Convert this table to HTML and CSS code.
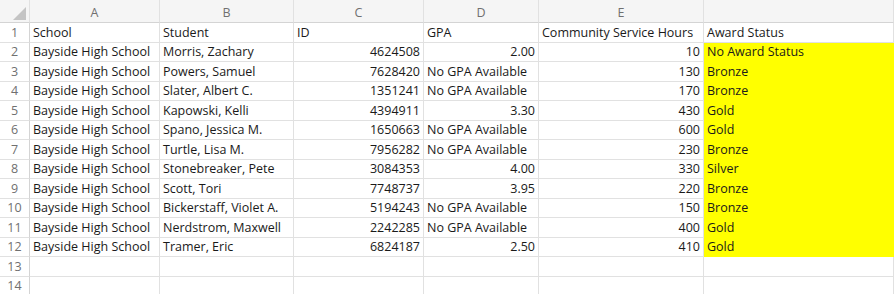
FILE: index.html
```html
<!DOCTYPE html>
<html>
<head>
<meta charset="utf-8">
<link rel="stylesheet" href="styles.css">
</head>
<body>
<div class="sheet">
  <div class="hd corner"><span class="tri"></span></div>
  <div class="hd">A</div><div class="hd">B</div><div class="hd">C</div><div class="hd">D</div><div class="hd">E</div><div class="hd"></div>

  <div class="rn">1</div><div class="c">School</div><div class="c">Student</div><div class="c">ID</div><div class="c">GPA</div><div class="c">Community Service Hours</div><div class="c">Award Status</div>
  <div class="rn">2</div><div class="c">Bayside High School</div><div class="c">Morris, Zachary</div><div class="c r">4624508</div><div class="c r">2.00</div><div class="c r">10</div><div class="c y">No Award Status</div>
  <div class="rn">3</div><div class="c">Bayside High School</div><div class="c">Powers, Samuel</div><div class="c r">7628420</div><div class="c">No GPA Available</div><div class="c r">130</div><div class="c y">Bronze</div>
  <div class="rn">4</div><div class="c">Bayside High School</div><div class="c">Slater, Albert C.</div><div class="c r">1351241</div><div class="c">No GPA Available</div><div class="c r">170</div><div class="c y">Bronze</div>
  <div class="rn">5</div><div class="c">Bayside High School</div><div class="c">Kapowski, Kelli</div><div class="c r">4394911</div><div class="c r">3.30</div><div class="c r">430</div><div class="c y">Gold</div>
  <div class="rn">6</div><div class="c">Bayside High School</div><div class="c">Spano, Jessica M.</div><div class="c r">1650663</div><div class="c">No GPA Available</div><div class="c r">600</div><div class="c y">Gold</div>
  <div class="rn">7</div><div class="c">Bayside High School</div><div class="c">Turtle, Lisa M.</div><div class="c r">7956282</div><div class="c">No GPA Available</div><div class="c r">230</div><div class="c y">Bronze</div>
  <div class="rn">8</div><div class="c">Bayside High School</div><div class="c">Stonebreaker, Pete</div><div class="c r">3084353</div><div class="c r">4.00</div><div class="c r">330</div><div class="c y">Silver</div>
  <div class="rn">9</div><div class="c">Bayside High School</div><div class="c">Scott, Tori</div><div class="c r">7748737</div><div class="c r">3.95</div><div class="c r">220</div><div class="c y">Bronze</div>
  <div class="rn">10</div><div class="c">Bayside High School</div><div class="c">Bickerstaff, Violet A.</div><div class="c r">5194243</div><div class="c">No GPA Available</div><div class="c r">150</div><div class="c y">Bronze</div>
  <div class="rn">11</div><div class="c">Bayside High School</div><div class="c">Nerdstrom, Maxwell</div><div class="c r">2242285</div><div class="c">No GPA Available</div><div class="c r">400</div><div class="c y">Gold</div>
  <div class="rn">12</div><div class="c">Bayside High School</div><div class="c">Tramer, Eric</div><div class="c r">6824187</div><div class="c r">2.50</div><div class="c r">410</div><div class="c y">Gold</div>
  <div class="rn">13</div><div class="c"></div><div class="c"></div><div class="c"></div><div class="c"></div><div class="c"></div><div class="c"></div>
  <div class="rn">14</div><div class="c"></div><div class="c"></div><div class="c"></div><div class="c"></div><div class="c"></div><div class="c"></div>
</div>
</body>
</html>
```

FILE: styles.css
```css
* { box-sizing: border-box; }
html, body { margin: 0; padding: 0; background: #fff; }
body { width: 894px; height: 294px; overflow: hidden; }
.sheet {
  display: grid;
  grid-template-columns: 30px 130px 134px 130px 115px 165px 1fr;
  grid-template-rows: 23px repeat(14, 19.5px);
  font-family: "Open Sans", sans-serif;
  font-size: 12.5px;
  color: #1a1a1a;
}
.hd {
  background: #f5f5f5;
  border-right: 1px solid #e1e1e1;
  border-bottom: 1px solid #d4d4d4;
  color: #707070;
  display: flex;
  align-items: center;
  justify-content: center;
  padding-top: 2px;
}
.corner { position: relative; }
.tri {
  position: absolute;
  right: 3px;
  bottom: 2px;
  width: 0; height: 0;
  border-left: 13px solid transparent;
  border-bottom: 13px solid #c4c4c4;
}
.rn {
  border-right: 1px solid #d4d4d4;
  border-bottom: 1px solid #e1e1e1;
  color: #707070;
  display: flex;
  align-items: center;
  justify-content: center;
  background: #fff;
}
.c {
  border-right: 1px solid #e1e1e1;
  border-bottom: 1px solid #e1e1e1;
  padding: 0 3px;
  display: flex;
  align-items: center;
  white-space: nowrap;
  overflow: hidden;
}
.r { justify-content: flex-end; }
.y { background: #ffff00; border-right-color: #ffff00; border-bottom-color: #ffff00; }
```
